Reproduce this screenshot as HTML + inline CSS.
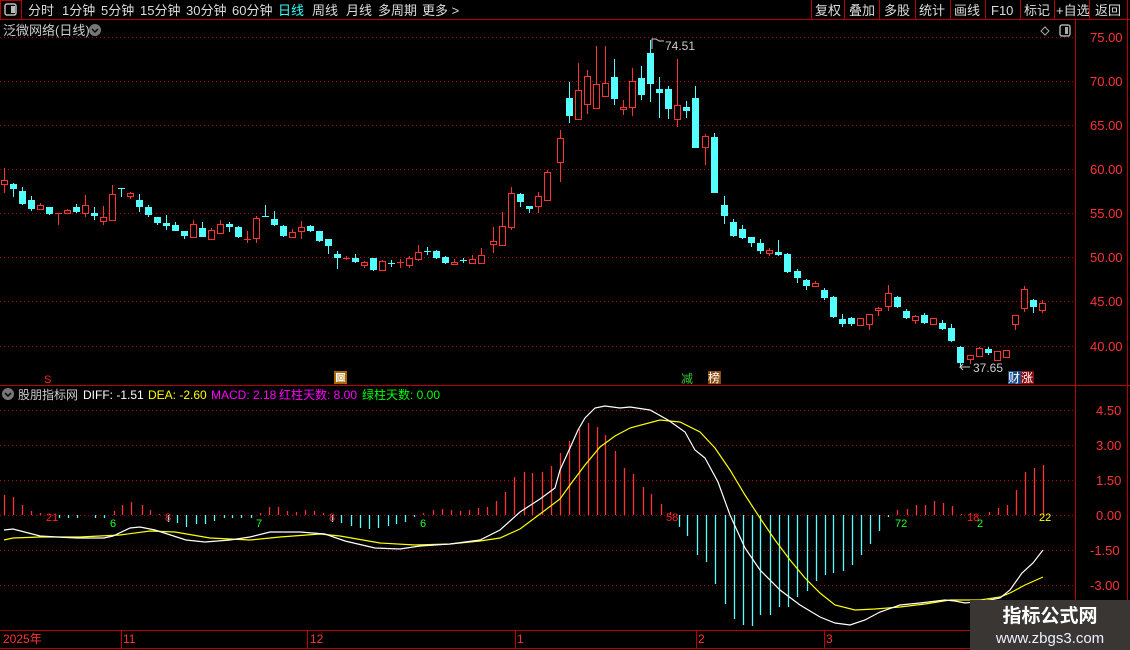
<!DOCTYPE html>
<html><head><meta charset="utf-8"><style>
body{margin:0;background:#000;width:1130px;height:650px;overflow:hidden;font-family:"Liberation Sans","Noto Sans CJK SC",sans-serif}
svg{display:block}
text{font-family:"Liberation Sans","Noto Sans CJK SC",sans-serif}
</style></head><body>
<svg id="s" width="1130" height="650" xmlns="http://www.w3.org/2000/svg">
<rect width="1130" height="650" fill="#000"/>
<!-- top bar -->
<line x1="0" y1="19.5" x2="1130" y2="19.5" stroke="#b00" />
<rect x="0.5" y="0.5" width="21" height="19" fill="none" stroke="#b00"/>
<rect x="5" y="4" width="11" height="11" rx="2" fill="none" stroke="#bbb" stroke-width="1.5"/><rect x="11" y="6" width="4" height="7" fill="#bbb"/>
<g font-size="13" fill="#ddd">
<text x="28" y="15">分时</text><text x="62" y="15">1分钟</text><text x="101" y="15">5分钟</text><text x="140" y="15">15分钟</text><text x="186" y="15">30分钟</text><text x="232" y="15">60分钟</text><text x="278" y="15" fill="#3ff">日线</text><text x="312" y="15">周线</text><text x="346" y="15">月线</text><text x="378" y="15">多周期</text><text x="422" y="15">更多 &gt;</text>
<text x="815" y="15">复权</text><text x="849" y="15">叠加</text><text x="884" y="15">多股</text><text x="919" y="15">统计</text><text x="954" y="15">画线</text><text x="991" y="15">F10</text><text x="1024" y="15">标记</text><text x="1056" y="15">+自选</text><text x="1095" y="15">返回</text>
</g>
<g stroke="#b00"><line x1="811.5" y1="0" x2="811.5" y2="20"/><line x1="844.5" y1="0" x2="844.5" y2="20"/><line x1="879.5" y1="0" x2="879.5" y2="20"/><line x1="915.5" y1="0" x2="915.5" y2="20"/><line x1="950.5" y1="0" x2="950.5" y2="20"/><line x1="985.5" y1="0" x2="985.5" y2="20"/><line x1="1020.5" y1="0" x2="1020.5" y2="20"/><line x1="1054.5" y1="0" x2="1054.5" y2="20"/><line x1="1089.5" y1="0" x2="1089.5" y2="20"/><line x1="1127.5" y1="0" x2="1127.5" y2="650"/></g>
<text x="3" y="35" font-size="13" fill="#ccc">泛微网络(日线)</text>
<circle cx="95" cy="30" r="6" fill="#777"/><path d="M92 29l3 3 3-3" stroke="#000" fill="none" stroke-width="1.5"/>
<path d="M1045 27l4 4-4 4-4-4z" fill="none" stroke="#aaa"/>
<rect x="1060" y="25" width="10" height="11" rx="2" fill="none" stroke="#aaa" stroke-width="1.5"/><rect x="1065" y="27" width="3" height="7" fill="#aaa"/>
<!-- axes -->
<line x1="1075.5" y1="20" x2="1075.5" y2="630" stroke="#b00"/>
<line x1="0" y1="385.5" x2="1130" y2="385.5" stroke="#b00"/>
<line x1="0" y1="630.5" x2="1127" y2="630.5" stroke="#b00"/>
<line x1="0" y1="648.5" x2="1127" y2="648.5" stroke="#b00"/>
<g id="grid" stroke="#a00" stroke-dasharray="1 3"></g>
<g font-size="13" fill="#f33">
<text x="1090" y="42">75.00</text><text x="1090" y="86">70.00</text><text x="1090" y="130">65.00</text><text x="1090" y="174">60.00</text><text x="1090" y="218">55.00</text><text x="1090" y="262">50.00</text><text x="1090" y="306">45.00</text><text x="1090" y="351">40.00</text>
<text x="1096" y="415">4.50</text><text x="1096" y="450">3.00</text><text x="1096" y="485">1.50</text><text x="1096" y="520">0.00</text><text x="1090" y="555">-1.50</text><text x="1090" y="590">-3.00</text>
</g>
<g id="c"></g>
<g fill="#ccc" font-size="12"><text x="665" y="50">74.51</text><text x="973" y="372">37.65</text></g>
<path d="M652 49v-10h4l3 2h5" stroke="#ccc" fill="none"/><path d="M970 367h-10l3-3m-3 3l3 3" stroke="#ccc" fill="none"/>
<text x="44" y="383" font-size="11" fill="#f22">S</text>
<rect x="334" y="371" width="13" height="13" fill="#a60"/><rect x="336" y="373" width="9" height="9" fill="#fff"/><text x="337" y="381" font-size="8" fill="#a60">回</text>
<text x="681" y="383" font-size="12" fill="#3c3">减</text>
<rect x="708" y="371" width="13" height="13" fill="#8a4a10"/><text x="708" y="382" font-size="12" fill="#fff">榜</text>
<rect x="1008" y="371" width="13" height="13" fill="#1a4a8a"/><text x="1008" y="382" font-size="12" fill="#fff">财</text>
<rect x="1021" y="371" width="13" height="13" fill="#8a0a10"/><text x="1021" y="382" font-size="12" fill="#fff">涨</text>
<!-- MACD header -->
<circle cx="8" cy="394" r="6" fill="#777"/><path d="M5 393l3 3 3-3" stroke="#000" fill="none" stroke-width="1.5"/>
<g font-size="12"><text x="18" y="399" fill="#ccc">股朋指标网</text><text x="83" y="399" fill="#fff">DIFF: -1.51</text><text x="148" y="399" fill="#ff0">DEA: -2.60</text><text x="211" y="399" fill="#f0f">MACD: 2.18</text><text x="279" y="399" fill="#f0f">红柱天数: 8.00</text><text x="362" y="399" fill="#0f0">绿柱天数: 0.00</text></g>
<g id="m"></g>
<polyline fill="none" stroke="#ff0" stroke-width="1.2" points="4,540 13,538 40,537 80,537 120,535 150,531 175,532 210,538 250,540 280,537 320,534 340,536 380,543 415,545 450,544 480,541 500,538 520,529 540,514 560,499 570,485 585,465 600,447 615,436 630,428 660,420 680,422 700,432 715,448 730,470 745,495 760,518 775,540 790,560 805,578 820,593 835,605 855,610 875,609 900,607 925,604 950,600 980,600 1000,597 1010,593 1025,585 1043,577"/>
<polyline fill="none" stroke="#fff" stroke-width="1.2" points="4,530 13,529 40,536 57,537 77,538 104,538 113,536 130,528 140,527 155,530 186,540 205,542 230,540 250,537 270,532 300,532 325,534 345,541 375,548 400,549 420,546 450,544 480,540 500,530 520,512 540,499 555,488 560,470 570,448 578,430 585,418 595,408 605,406 620,408 630,407 650,410 668,420 685,432 695,450 705,458 718,482 730,515 745,548 760,570 780,590 800,605 820,617 835,623 850,625 865,620 880,612 900,605 920,603 945,600 955,601 965,603 985,601 1000,598 1010,590 1022,573 1033,563 1043,550"/>
<g font-size="11"><text x="46" y="521" fill="#f22">21</text><text x="110" y="527" fill="#2f2">6</text><text x="165" y="521" fill="#f22">8</text><text x="256" y="527" fill="#2f2">7</text><text x="329" y="521" fill="#f22">8</text><text x="420" y="527" fill="#2f2">6</text><text x="666" y="521" fill="#f22">58</text><text x="895" y="527" fill="#2f2">72</text><text x="967" y="521" fill="#f22">18</text><text x="977" y="527" fill="#2f2">2</text><text x="1039" y="521" fill="#ff0">22</text></g>
<!-- bottom axis -->
<g font-size="12" fill="#f33"><text x="3" y="643">2025年</text><text x="123" y="643">11</text><text x="310" y="643">12</text><text x="517" y="643">1</text><text x="698" y="643">2</text><text x="826" y="643">3</text></g>
<g stroke="#b00"><line x1="121.5" y1="631" x2="121.5" y2="648"/><line x1="307.5" y1="631" x2="307.5" y2="648"/><line x1="515.5" y1="631" x2="515.5" y2="648"/><line x1="696.5" y1="631" x2="696.5" y2="648"/><line x1="824.5" y1="631" x2="824.5" y2="648"/></g>
<rect x="970" y="600" width="160" height="50" fill="#3a3634"/>
<text x="1050" y="622" font-size="19" font-weight="bold" fill="#fff" text-anchor="middle">指标公式网</text>
<text x="1050" y="643" font-size="15" fill="#eef" text-anchor="middle">www.zbgs3.com</text>
</svg>
<script>
var NS="http://www.w3.org/2000/svg";
function el(p,t,a){var e=document.createElementNS(NS,t);for(var k in a)e.setAttribute(k,a[k]);p.appendChild(e);return e;}
var g=document.getElementById('grid');
[37,81,125,169,213,257,301,346,410,445,480,515,550,585].forEach(function(y){el(g,'line',{x1:0,x2:1075,y1:y+.5,y2:y+.5});});
var C=[[4,180,184,168,193,'r'],[13,184,189,183,197,'c'],[22,191,204,187,205,'c'],[31,200,209,196,211,'c'],[40,205,209,203,209,'r'],[49,207,214,207,215,'c'],[58,213,213,213,225,'r'],[67,210,213,209,214,'r'],[76,207,212,204,213,'c'],[85,205,213,195,217,'r'],[94,213,216,207,220,'c'],[103,217,221,206,225,'r'],[112,194,220,185,221,'r'],[121,188,188,188,197,'c'],[130,193,196,192,199,'r'],[139,200,207,194,212,'c'],[148,207,215,205,217,'c'],[157,217,223,217,225,'c'],[166,223,226,215,230,'c'],[175,225,231,222,231,'c'],[184,231,236,231,239,'c'],[193,224,237,220,238,'r'],[202,228,237,222,237,'c'],[211,230,239,228,239,'r'],[220,224,233,220,234,'r'],[229,224,227,222,232,'c'],[238,227,237,226,238,'c'],[247,239,239,231,243,'r'],[256,218,238,216,243,'r'],[265,216,216,205,217,'c'],[274,219,225,211,226,'c'],[283,226,236,225,237,'c'],[292,232,237,229,238,'r'],[301,227,231,221,239,'r'],[310,226,231,225,232,'c'],[319,231,241,231,242,'c'],[328,239,246,239,254,'c'],[337,254,258,251,269,'c'],[346,258,258,256,260,'r'],[355,258,262,254,263,'c'],[364,262,265,261,268,'r'],[373,258,270,258,271,'c'],[382,261,270,260,270,'r'],[391,263,263,260,267,'c'],[400,262,262,259,268,'r'],[409,258,265,256,268,'r'],[418,252,259,245,261,'r'],[427,251,251,247,255,'c'],[436,251,258,250,259,'c'],[445,257,263,256,264,'c'],[454,262,264,259,265,'r'],[463,260,260,258,263,'c'],[472,259,263,255,264,'r'],[481,255,263,248,264,'r'],[493,241,244,227,253,'r'],[502,226,245,212,246,'r'],[511,193,227,187,230,'r'],[520,194,202,193,207,'c'],[529,206,209,206,213,'c'],[538,196,206,192,213,'r'],[547,172,200,170,200,'r'],[560,138,162,130,182,'r'],[569,98,116,82,123,'c'],[578,90,119,63,120,'r'],[587,76,104,70,114,'r'],[596,84,108,46,108,'r'],[605,83,96,46,96,'r'],[614,77,99,59,105,'c'],[623,107,109,100,115,'r'],[632,81,107,68,116,'r'],[641,78,95,66,100,'c'],[650,53,84,40,102,'c'],[659,89,93,77,118,'c'],[668,89,109,86,119,'c'],[677,105,119,59,127,'r'],[686,107,111,101,118,'c'],[695,98,148,86,148,'c'],[705,136,147,134,165,'r'],[714,137,193,133,193,'c'],[724,205,216,196,224,'c'],[733,222,236,219,237,'c'],[742,229,238,225,239,'c'],[751,237,243,237,247,'c'],[760,243,251,239,254,'c'],[769,250,253,248,256,'r'],[778,252,255,240,256,'c'],[787,254,272,253,273,'c'],[797,271,278,269,283,'c'],[806,280,286,279,290,'c'],[815,283,286,281,287,'r'],[824,290,298,288,300,'c'],[833,297,317,296,318,'c'],[842,319,324,314,327,'c'],[851,318,324,317,326,'c'],[860,318,325,318,325,'r'],[869,314,324,314,330,'r'],[878,308,310,307,316,'r'],[888,293,306,285,311,'r'],[897,297,307,296,308,'c'],[906,311,318,309,319,'c'],[915,316,320,315,324,'r'],[924,315,323,313,324,'c'],[933,318,324,318,324,'r'],[942,323,329,320,330,'c'],[951,328,341,324,342,'c'],[960,347,363,346,367,'c'],[970,355,359,355,364,'r'],[979,348,356,347,357,'r'],[988,349,353,347,355,'c'],[997,351,360,351,360,'r'],[1006,350,357,350,357,'r'],[1015,315,324,315,330,'r'],[1024,289,308,286,312,'r'],[1033,300,307,299,313,'c'],[1042,303,310,300,313,'r']];
var cg=document.getElementById('c');
C.forEach(function(d){var x=d[0],col=d[5]=='r'?'#ff3232':'#54ffff';
el(cg,'line',{x1:x+.5,x2:x+.5,y1:d[3],y2:d[4],stroke:col});
if(d[2]-d[1]<1){el(cg,'line',{x1:x-3,x2:x+4,y1:d[1]+.5,y2:d[1]+.5,stroke:col});}
else if(d[5]=='r'){el(cg,'rect',{x:x-2.5,y:d[1]+.5,width:6,height:d[2]-d[1],fill:'#000',stroke:col});}
else{el(cg,'rect',{x:x-3,y:d[1],width:7,height:d[2]-d[1],fill:col});}});
var M=[[4,495],[13,497],[22,505],[31,511],[40,513],[49,514],[59,518],[68,518],[77,518],[95,518],[104,518],[114,511],[122,505],[131,502],[142,505],[150,510],[159,514],[168,522],[177,523],[186,527],[196,524],[205,524],[214,521],[224,518],[232,518],[241,518],[251,518],[260,513],[269,507],[278,507],[287,511],[296,512],[305,510],[314,511],[323,513],[332,522],[341,523],[351,526],[360,528],[369,529],[378,528],[388,526],[396,524],[405,522],[414,517],[423,513],[433,510],[442,509],[451,510],[460,511],[469,510],[478,508],[487,507],[496,501],[505,492],[514,477],[524,472],[532,473],[542,472],[551,466],[560,453],[569,441],[579,429],[588,423],[597,427],[605,435],[615,451],[624,468],[633,474],[643,487],[651,494],[661,504],[670,512],[679,527],[687,536],[697,555],[706,562],[715,584],[725,604],[734,619],[743,625],[752,626],[760,615],[770,615],[779,607],[788,607],[797,597],[807,591],[816,581],[825,575],[833,573],[843,571],[852,565],[861,555],[870,544],[879,531],[888,517],[897,510],[907,509],[916,505],[925,505],[934,501],[943,503],[952,506],[961,514],[970,513],[989,512],[998,508],[1007,505],[1016,490],[1025,472],[1034,468],[1043,465]];
var mg=document.getElementById('m');
M.forEach(function(d){var col=d[1]<515?'#ff3232':'#54ffff';el(mg,'line',{x1:d[0]+.5,x2:d[0]+.5,y1:515,y2:d[1],stroke:col,'stroke-width':1.3});});
</script>
</body></html>
